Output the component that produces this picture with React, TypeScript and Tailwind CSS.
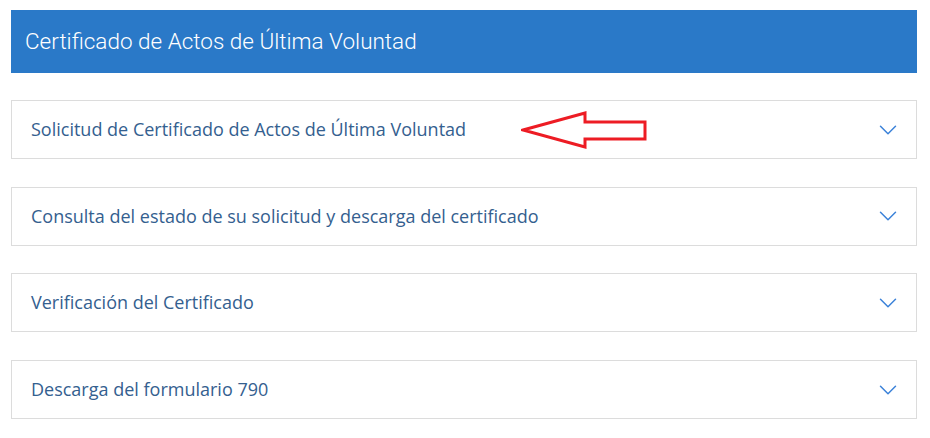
import { ChevronDown } from "lucide-react";

const items = [
  "Solicitud de Certificado de Actos de Última Voluntad",
  "Consulta del estado de su solicitud y descarga del certificado",
  "Verificación del Certificado",
  "Descarga del formulario 790",
];

function RedArrow() {
  return (
    <svg
      width="130"
      height="42"
      viewBox="0 0 130 42"
      className="absolute left-[509px] top-[10px] pointer-events-none"
    >
      <polygon
        points="2,19 64,2 64,11 124,11 124,28 64,28 64,36"
        fill="none"
        stroke="#ed1c24"
        strokeWidth="3"
        strokeLinejoin="miter"
      />
    </svg>
  );
}

export default function App() {
  return (
    <div className="w-[930px] h-[438px] bg-white pt-[10px] pl-[11px] overflow-hidden">
      <div className="w-[906px]">
        {/* title bar */}
        <div className="h-[63px] bg-[#2a79c8] flex items-center pl-[14px]">
          <h1 className="text-white text-[22.5px] font-light font-['Roboto',sans-serif]">
            Certificado de Actos de Última Voluntad
          </h1>
        </div>
        {/* accordion rows */}
        <div className="mt-[27px] flex flex-col gap-[27.7px]">
          {items.map((label, i) => (
            <div
              key={label}
              className="relative h-[59px] border border-[#dcdcdc] flex items-center pl-[19px] pr-[13px]"
            >
              <span className="text-[18px] text-[#34608f] font-['Open_Sans',sans-serif]">{label}</span>
              {i === 0 && <RedArrow />}
              <ChevronDown className="ml-auto text-[#3b82d9]" size={30} strokeWidth={1.2} />
            </div>
          ))}
        </div>
      </div>
    </div>
  );
}
